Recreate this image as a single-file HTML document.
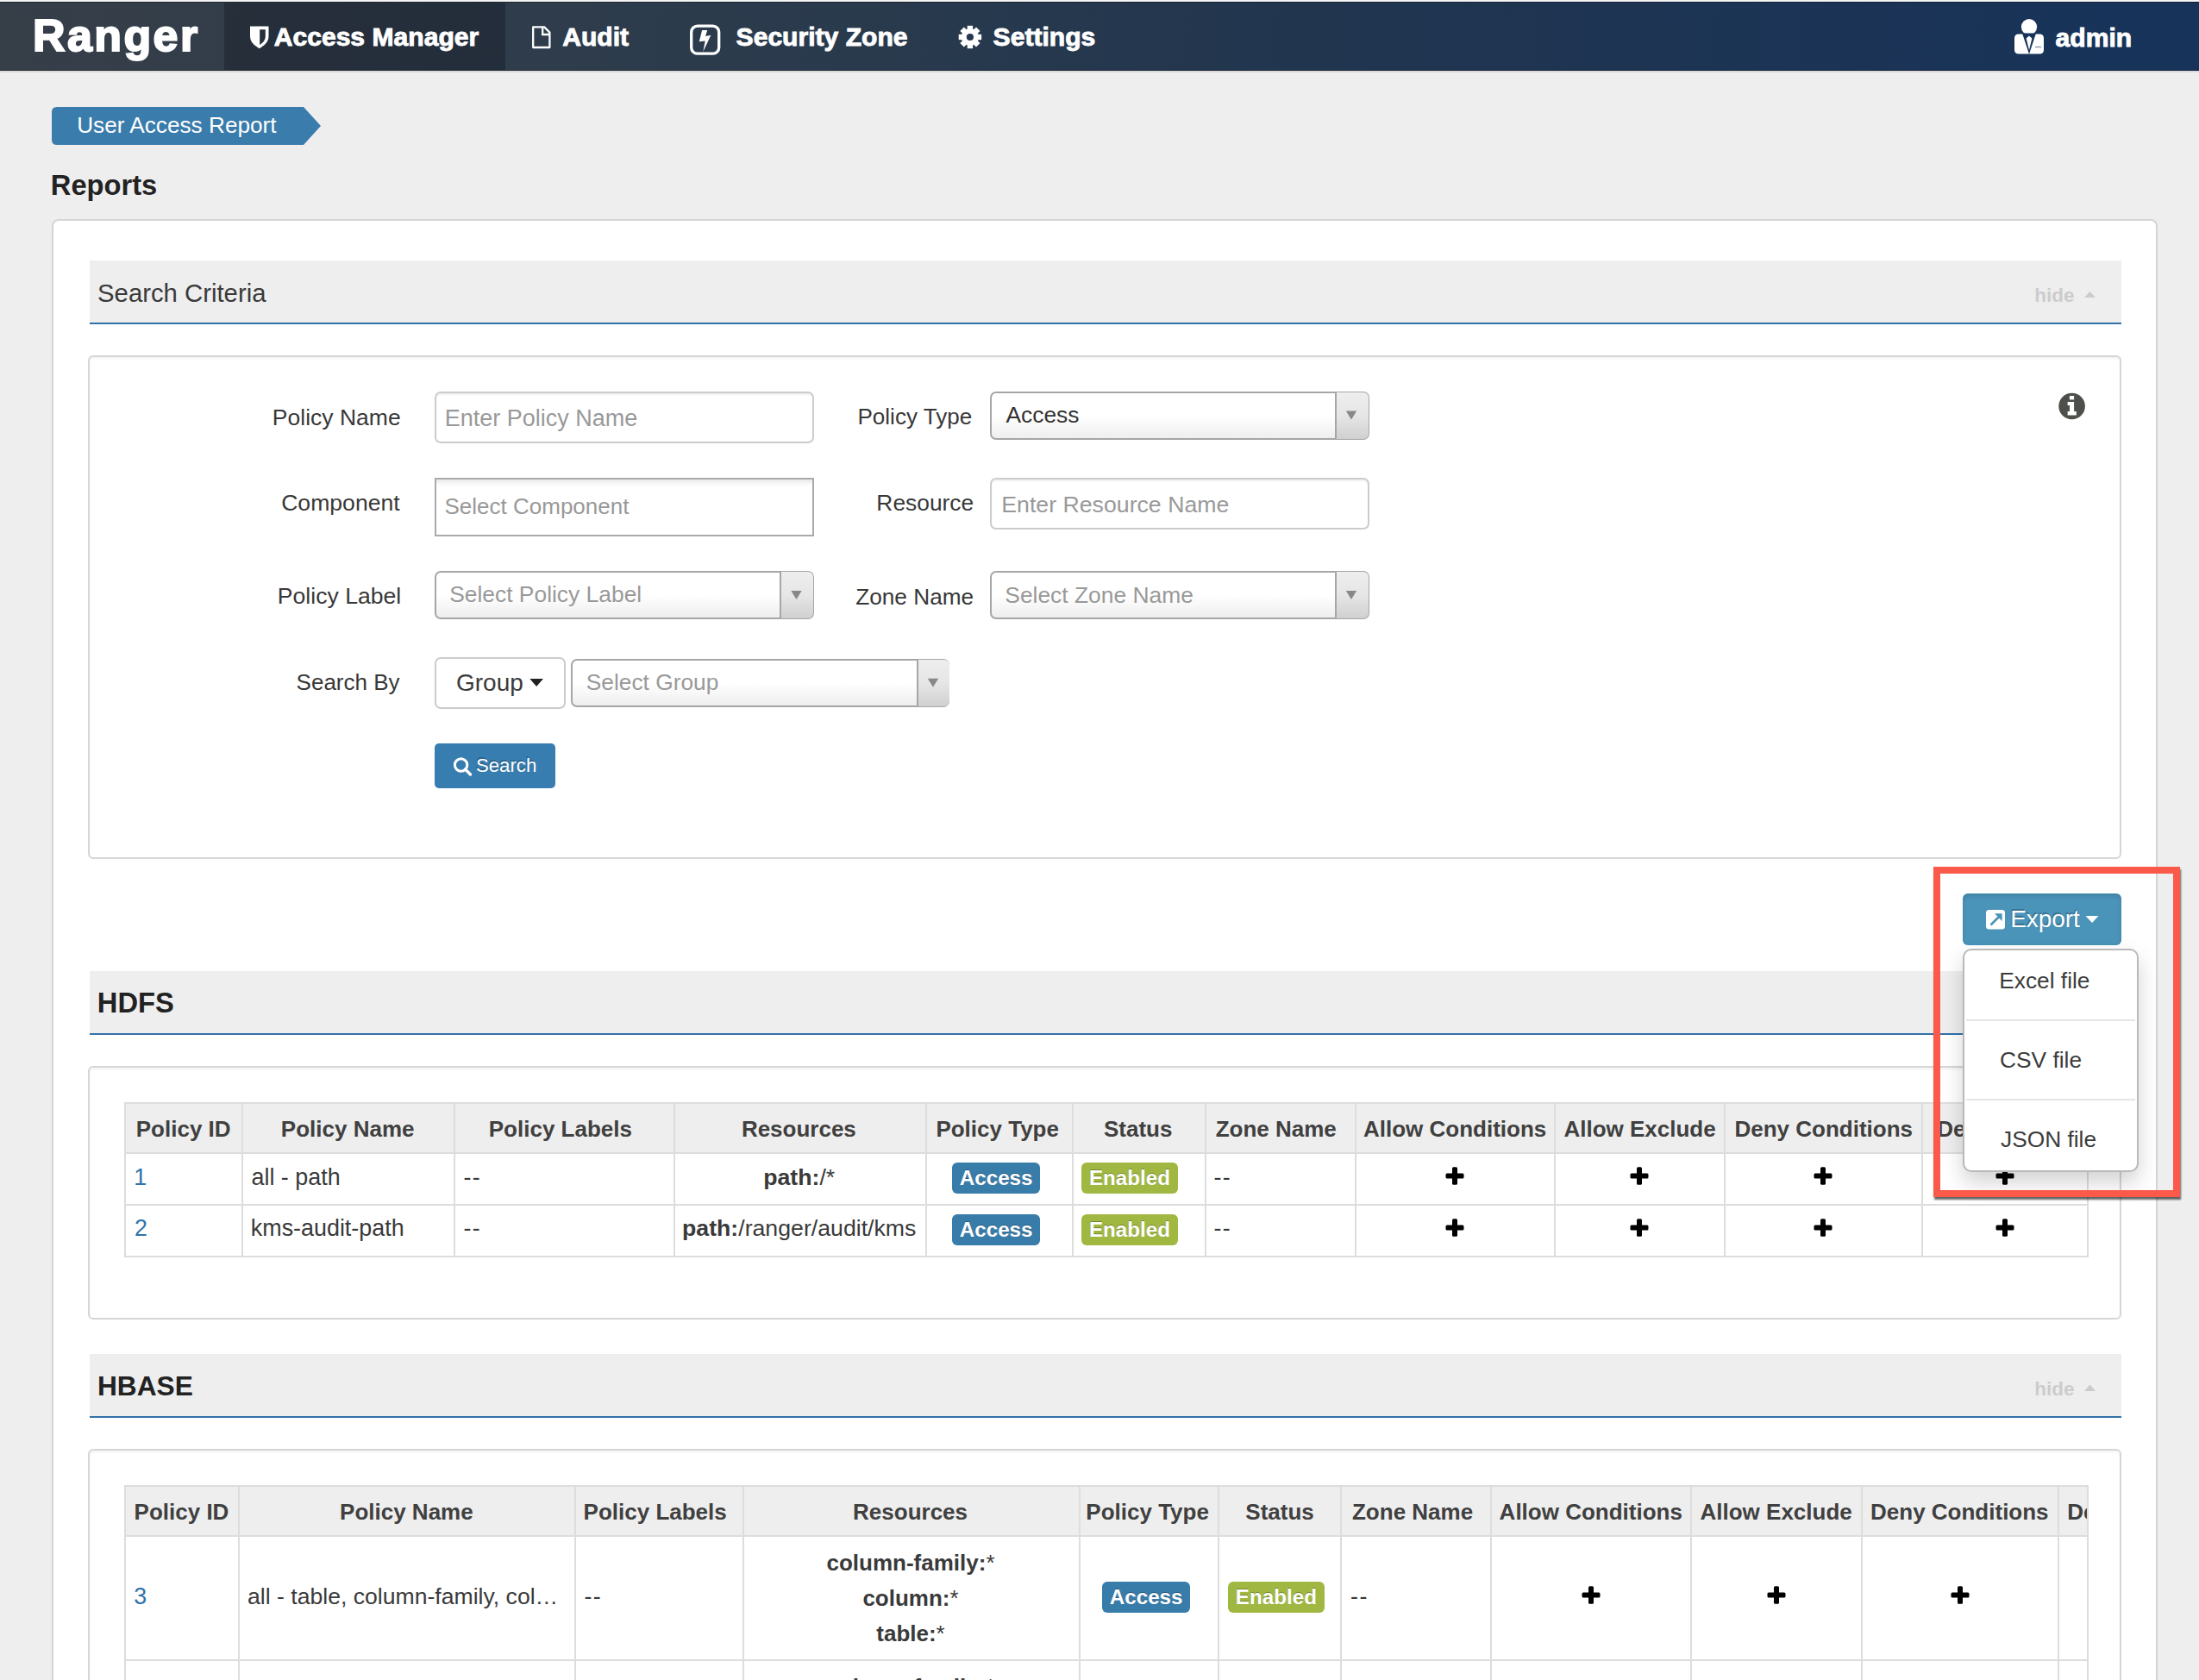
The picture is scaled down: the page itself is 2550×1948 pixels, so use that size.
<!DOCTYPE html><html><head><meta charset="utf-8"><style>
html,body{margin:0;padding:0;}
body{width:2550px;height:1948px;overflow:hidden;background:#eeeeee;position:relative;font-family:"Liberation Sans", sans-serif;}
.a{position:absolute;white-space:nowrap;box-sizing:border-box;}
svg{position:absolute;overflow:visible;}
</style></head><body>
<div class="a" style="left:0.00px;top:0.00px;width:2550.00px;height:2.00px;background:#f4f4f4;"></div>
<div class="a" style="left:0.00px;top:2.00px;width:2550.00px;height:80.00px;background:linear-gradient(90deg,#363e48 0%,#303d4b 20%,#293a4d 40%,#21354f 60%,#17335a 100%);border-top:1px solid rgba(0,0,0,0.35);border-bottom:1px solid rgba(0,0,0,0.35);"></div>
<div class="a" style="left:0.00px;top:82.00px;width:2550.00px;height:2.00px;background:#d9d9d9;"></div>
<div class="a" style="left:260.00px;top:3.00px;width:326.00px;height:78.00px;background:rgba(10,14,22,0.30);"></div>
<div class="a" style="left:38.02px;top:14.77px;font-size:52.00px;line-height:52.00px;font-weight:bold;color:#fff;-webkit-text-stroke:2px #fff;letter-spacing:2.4px;">Ranger</div>
<div class="a" style="left:317.70px;top:28.16px;font-size:30.10px;line-height:30.10px;font-weight:bold;color:#fff;-webkit-text-stroke:0.9px #fff;">Access Manager</div>
<div class="a" style="left:652.20px;top:28.16px;font-size:30.10px;line-height:30.10px;font-weight:bold;color:#fff;-webkit-text-stroke:0.9px #fff;">Audit</div>
<div class="a" style="left:853.58px;top:28.16px;font-size:30.10px;line-height:30.10px;font-weight:bold;color:#fff;-webkit-text-stroke:0.9px #fff;">Security Zone</div>
<div class="a" style="left:1151.58px;top:28.16px;font-size:30.10px;line-height:30.10px;font-weight:bold;color:#fff;-webkit-text-stroke:0.9px #fff;">Settings</div>
<div class="a" style="left:2383.57px;top:28.66px;font-size:30.10px;line-height:30.10px;font-weight:bold;color:#fff;-webkit-text-stroke:0.9px #fff;">admin</div>
<svg style="left:0;top:0" width="2550" height="82"><path d="M290 30.5 H311.5 V42 C311.5 49 306 53 300.7 56.2 C295.5 53 290 49 290 42 Z" fill="#fff"/><path d="M301.2 34.2 H307.8 V42 C307.8 46.5 305 49.5 301.2 52 Z" fill="#262f3b"/><path d="M618.2 31.4 H631.2 L637.4 37.6 V55 H618.2 Z" fill="none" stroke="#fff" stroke-width="2.3" stroke-linejoin="round"/><path d="M629.2 31.4 V40 H637.4" fill="none" stroke="#fff" stroke-width="2.3"/><rect x="801.7" y="30.2" width="32" height="32" rx="7" fill="none" stroke="#fff" stroke-width="3.3"/><path d="M814.1 34.9 L820.2 34.9 L818.1 42.0 L824.4 40.8 L815.3 59.9 L817.7 47.4 L810.8 48.3 Z" fill="#fff"/><g transform="translate(1124.9 43)" fill="#fff"><rect x="-3.2" y="-13.2" width="6.4" height="8" transform="rotate(0)"/><rect x="-3.2" y="-13.2" width="6.4" height="8" transform="rotate(45)"/><rect x="-3.2" y="-13.2" width="6.4" height="8" transform="rotate(90)"/><rect x="-3.2" y="-13.2" width="6.4" height="8" transform="rotate(135)"/><rect x="-3.2" y="-13.2" width="6.4" height="8" transform="rotate(180)"/><rect x="-3.2" y="-13.2" width="6.4" height="8" transform="rotate(225)"/><rect x="-3.2" y="-13.2" width="6.4" height="8" transform="rotate(270)"/><rect x="-3.2" y="-13.2" width="6.4" height="8" transform="rotate(315)"/><circle r="10"/><circle r="4.1" fill="#263650"/></g><circle cx="2353" cy="31.2" r="9.1" fill="#fff"/><path d="M2341 39.5 H2365 Q2370 39.5 2370 44.5 V57.5 Q2370 62.5 2365 62.5 H2341 Q2336 62.5 2336 57.5 V44.5 Q2336 39.5 2341 39.5 Z" fill="#fff"/><path d="M2345 38.6 L2353 62.8 L2361 38.6 Z" fill="#17325a"/><path d="M2353 41.5 L2356.4 44.5 L2353 58 L2349.6 44.5 Z" fill="#fff"/><rect x="2360" y="53.8" width="7" height="1.4" fill="#8597b0"/></svg>
<svg style="left:0;top:0" width="400" height="200"><path d="M66 124 H352 L372 146 L352 168 H66 Q60 168 60 162 V130 Q60 124 66 124 Z" fill="#3a7cab"/></svg>
<div class="a" style="left:89.18px;top:131.82px;font-size:26.20px;line-height:26.20px;font-weight:normal;color:#fff;">User Access Report</div>
<div class="a" style="left:58.81px;top:199.31px;font-size:32.70px;line-height:32.70px;font-weight:bold;color:#222;">Reports</div>
<div class="a" style="left:60.00px;top:254.00px;width:2442.00px;height:1846.00px;background:#fff;border:2px solid #d4d4d4;border-radius:8px;"></div>
<div class="a" style="left:104.00px;top:302.00px;width:2356.00px;height:74.00px;background:#eeeeee;border-bottom:2px solid #3171a9;"></div>
<div class="a" style="left:113.07px;top:325.19px;font-size:29.30px;line-height:29.30px;font-weight:normal;color:#3a3a3a;">Search Criteria</div>
<div class="a" style="left:2359.23px;top:331.95px;font-size:22.50px;line-height:22.50px;font-weight:bold;color:#cccccc;">hide</div>
<svg style="left:0;top:0" width="2550" height="1948"><path d="M2417 345 L2423.5 338 L2430 345 Z" fill="#cccccc"/><path d="M2417 1613 L2423.5 1605.5 L2430 1613 Z" fill="#cccccc"/></svg>
<div class="a" style="left:102.00px;top:412.00px;width:2358.00px;height:584.00px;background:#fff;border:2px solid #d6d6d6;border-radius:6px;box-shadow:inset 0 2px 3px rgba(0,0,0,0.05);"></div>
<div class="a" style="left:315.83px;top:470.85px;font-size:26.52px;line-height:26.52px;font-weight:normal;color:#383838;">Policy Name</div>
<div class="a" style="left:326.17px;top:569.88px;font-size:26.60px;line-height:26.60px;font-weight:normal;color:#383838;">Component</div>
<div class="a" style="left:321.85px;top:678.38px;font-size:26.60px;line-height:26.60px;font-weight:normal;color:#383838;">Policy Label</div>
<div class="a" style="left:343.61px;top:778.39px;font-size:26.00px;line-height:26.00px;font-weight:normal;color:#383838;">Search By</div>
<div class="a" style="left:994.47px;top:469.93px;font-size:26.06px;line-height:26.06px;font-weight:normal;color:#383838;">Policy Type</div>
<div class="a" style="left:1016.36px;top:570.38px;font-size:26.36px;line-height:26.36px;font-weight:normal;color:#383838;">Resource</div>
<div class="a" style="left:992.18px;top:678.50px;font-size:26.22px;line-height:26.22px;font-weight:normal;color:#383838;">Zone Name</div>
<div class="a" style="left:504.00px;top:454.00px;width:440.00px;height:60.00px;background:#fff;border:2px solid #cccccc;border-radius:7px;box-shadow:inset 0 2px 2px rgba(0,0,0,0.06);"></div>
<div class="a" style="left:515.79px;top:472.14px;font-size:27.00px;line-height:27.00px;font-weight:normal;color:#999;">Enter Policy Name</div>
<div class="a" style="left:504.00px;top:554.00px;width:440.00px;height:68.00px;background:linear-gradient(#e9e9e9 0px,#fbfbfb 6px,#fff 9px);border:2px solid #aaaaaa;"></div>
<div class="a" style="left:515.52px;top:574.49px;font-size:26.00px;line-height:26.00px;font-weight:normal;color:#999;">Select Component</div>
<div class="a" style="left:1148.00px;top:454.00px;width:440.00px;height:160.00px;display:none"></div>
<div class="a" style="left:1147.50px;top:554.00px;width:440.50px;height:59.50px;background:#fff;border:2px solid #cccccc;border-radius:7px;box-shadow:inset 0 2px 2px rgba(0,0,0,0.06);"></div>
<div class="a" style="left:1161.31px;top:571.89px;font-size:26.70px;line-height:26.70px;font-weight:normal;color:#999;">Enter Resource Name</div>
<div class="a" style="left:504.00px;top:662.00px;width:440.00px;height:56.00px;background:linear-gradient(#ffffff 0%,#ffffff 50%,#eeeeee 100%);border:2px solid #a6a6a6;border-radius:7px;"></div>
<div class="a" style="left:904.00px;top:663.00px;width:39.00px;height:54.00px;background:linear-gradient(#eeeeee 0%,#e6e6e6 50%,#d0d0d0 100%);border-left:2px solid #a6a6a6;border-radius:0 6px 6px 0;"></div>
<svg style="left:0;top:0" width="1" height="1"><path d="M917.3 685.0 L929.7 685.0 L923.5 695.0 Z" fill="#888"/></svg>
<div class="a" style="left:521.20px;top:676.05px;font-size:26.40px;line-height:26.40px;font-weight:normal;color:#999;">Select Policy Label</div>
<div class="a" style="left:1147.50px;top:453.50px;width:440.50px;height:56.00px;background:linear-gradient(#ffffff 0%,#ffffff 50%,#eeeeee 100%);border:2px solid #a6a6a6;border-radius:7px;"></div>
<div class="a" style="left:1547.50px;top:454.50px;width:39.50px;height:54.00px;background:linear-gradient(#eeeeee 0%,#e6e6e6 50%,#d0d0d0 100%);border-left:2px solid #a6a6a6;border-radius:0 6px 6px 0;"></div>
<svg style="left:0;top:0" width="1" height="1"><path d="M1560.8 476.5 L1573.2 476.5 L1567.0 486.5 Z" fill="#888"/></svg>
<div class="a" style="left:1166.45px;top:468.25px;font-size:26.40px;line-height:26.40px;font-weight:normal;color:#333;">Access</div>
<div class="a" style="left:1147.50px;top:662.00px;width:440.50px;height:56.00px;background:linear-gradient(#ffffff 0%,#ffffff 50%,#eeeeee 100%);border:2px solid #a6a6a6;border-radius:7px;"></div>
<div class="a" style="left:1547.50px;top:663.00px;width:39.50px;height:54.00px;background:linear-gradient(#eeeeee 0%,#e6e6e6 50%,#d0d0d0 100%);border-left:2px solid #a6a6a6;border-radius:0 6px 6px 0;"></div>
<svg style="left:0;top:0" width="1" height="1"><path d="M1560.8 685.0 L1573.2 685.0 L1567.0 695.0 Z" fill="#888"/></svg>
<div class="a" style="left:1165.30px;top:676.65px;font-size:26.40px;line-height:26.40px;font-weight:normal;color:#999;">Select Zone Name</div>
<div class="a" style="left:662.40px;top:764.00px;width:439.10px;height:55.50px;background:linear-gradient(#ffffff 0%,#ffffff 50%,#eeeeee 100%);border:2px solid #a6a6a6;border-radius:7px;"></div>
<div class="a" style="left:1062.50px;top:765.00px;width:38.00px;height:53.50px;background:linear-gradient(#eeeeee 0%,#e6e6e6 50%,#d0d0d0 100%);border-left:2px solid #a6a6a6;border-radius:0 6px 6px 0;"></div>
<svg style="left:0;top:0" width="1" height="1"><path d="M1075.8 786.8 L1088.2 786.8 L1082.0 796.8 Z" fill="#888"/></svg>
<div class="a" style="left:679.81px;top:778.13px;font-size:26.30px;line-height:26.30px;font-weight:normal;color:#999;">Select Group</div>
<div class="a" style="left:504.00px;top:762.00px;width:151.50px;height:59.50px;background:#fff;border:2px solid #cccccc;border-radius:7px;"></div>
<div class="a" style="left:528.99px;top:777.79px;font-size:28.00px;line-height:28.00px;font-weight:normal;color:#3a3a3a;">Group</div>
<svg style="left:0;top:0" width="1" height="1"><path d="M614.3 787 L630 787 L622.15 796 Z" fill="#222"/></svg>
<div class="a" style="left:504.00px;top:862.00px;width:140.00px;height:52.00px;background:#387db0;border-radius:5px;"></div>
<svg style="left:0;top:0" width="1" height="1"><circle cx="534.6" cy="887" r="7.2" fill="none" stroke="#fff" stroke-width="3"/><path d="M539.5 892 L545.5 898" stroke="#fff" stroke-width="3.4" stroke-linecap="round"/></svg>
<div class="a" style="left:551.99px;top:877.20px;font-size:22.20px;line-height:22.20px;font-weight:normal;color:#fff;text-shadow:-1px -2px 0 rgba(0,0,0,0.22);">Search</div>
<svg style="left:0;top:0" width="1" height="1"><circle cx="2402.6" cy="471" r="15.3" fill="#4d4f4a"/><rect x="2399.9" y="459" width="5.2" height="4.4" fill="#fff"/><path d="M2397.6 466 H2405.1 V477 H2407.8 V481.6 H2397.6 V477 H2400 V470 H2397.6 Z" fill="#fff"/></svg>
<div class="a" style="left:104.00px;top:1126.00px;width:2356.00px;height:74.00px;background:#eeeeee;border-bottom:2px solid #3171a9;"></div>
<div class="a" style="left:112.81px;top:1147.31px;font-size:32.70px;line-height:32.70px;font-weight:bold;color:#222;">HDFS</div>
<div class="a" style="left:2359.23px;top:1155.95px;font-size:22.50px;line-height:22.50px;font-weight:bold;color:#cccccc;">hide</div>
<div class="a" style="left:102.00px;top:1236.00px;width:2358.00px;height:294.00px;background:#fff;border:2px solid #d6d6d6;border-radius:6px;box-shadow:inset 0 2px 3px rgba(0,0,0,0.05);"></div>
<div class="a" style="left:104.00px;top:1570.00px;width:2356.00px;height:74.00px;background:#eeeeee;border-bottom:2px solid #3171a9;"></div>
<div class="a" style="left:112.88px;top:1592.16px;font-size:31.70px;line-height:31.70px;font-weight:bold;color:#222;">HBASE</div>
<div class="a" style="left:2359.23px;top:1599.95px;font-size:22.50px;line-height:22.50px;font-weight:bold;color:#cccccc;">hide</div>
<div class="a" style="left:102.00px;top:1680.00px;width:2358.00px;height:420.00px;background:#fff;border:2px solid #d6d6d6;border-radius:6px;box-shadow:inset 0 2px 3px rgba(0,0,0,0.05);"></div>
<svg style="left:0;top:0" width="1" height="1"><path d="M2417 1613 L2423.5 1605.5 L2430 1613 Z" fill="#cccccc"/></svg>
<div class="a" style="left:144.50px;top:1277.50px;width:2276.50px;height:59.50px;background:#eeeeee;"></div>
<div class="a" style="left:144.50px;top:1277.50px;width:2276.50px;height:2.00px;background:#dddddd;"></div>
<div class="a" style="left:144.50px;top:1335.50px;width:2276.50px;height:2.00px;background:#dddddd;"></div>
<div class="a" style="left:144.50px;top:1396.00px;width:2276.50px;height:2.00px;background:#dddddd;"></div>
<div class="a" style="left:144.50px;top:1456.00px;width:2276.50px;height:2.00px;background:#dddddd;"></div>
<div class="a" style="left:143.50px;top:1277.50px;width:2.00px;height:180.50px;background:#dddddd;"></div>
<div class="a" style="left:280.00px;top:1277.50px;width:2.00px;height:180.50px;background:#dddddd;"></div>
<div class="a" style="left:526.00px;top:1277.50px;width:2.00px;height:180.50px;background:#dddddd;"></div>
<div class="a" style="left:780.50px;top:1277.50px;width:2.00px;height:180.50px;background:#dddddd;"></div>
<div class="a" style="left:1072.50px;top:1277.50px;width:2.00px;height:180.50px;background:#dddddd;"></div>
<div class="a" style="left:1242.50px;top:1277.50px;width:2.00px;height:180.50px;background:#dddddd;"></div>
<div class="a" style="left:1396.50px;top:1277.50px;width:2.00px;height:180.50px;background:#dddddd;"></div>
<div class="a" style="left:1570.50px;top:1277.50px;width:2.00px;height:180.50px;background:#dddddd;"></div>
<div class="a" style="left:1802.00px;top:1277.50px;width:2.00px;height:180.50px;background:#dddddd;"></div>
<div class="a" style="left:1998.50px;top:1277.50px;width:2.00px;height:180.50px;background:#dddddd;"></div>
<div class="a" style="left:2227.50px;top:1277.50px;width:2.00px;height:180.50px;background:#dddddd;"></div>
<div class="a" style="left:2419.50px;top:1277.50px;width:2.00px;height:180.50px;background:#dddddd;"></div>
<div class="a" style="left:157.77px;top:1296.39px;font-size:26.00px;line-height:26.00px;font-weight:bold;color:#404040;">Policy ID</div>
<div class="a" style="left:325.86px;top:1296.39px;font-size:26.00px;line-height:26.00px;font-weight:bold;color:#404040;">Policy Name</div>
<div class="a" style="left:566.77px;top:1296.39px;font-size:26.00px;line-height:26.00px;font-weight:bold;color:#404040;">Policy Labels</div>
<div class="a" style="left:859.88px;top:1296.39px;font-size:26.00px;line-height:26.00px;font-weight:bold;color:#404040;">Resources</div>
<div class="a" style="left:1085.38px;top:1296.39px;font-size:26.00px;line-height:26.00px;font-weight:bold;color:#404040;">Policy Type</div>
<div class="a" style="left:1279.98px;top:1296.39px;font-size:26.00px;line-height:26.00px;font-weight:bold;color:#404040;">Status</div>
<div class="a" style="left:1409.64px;top:1296.39px;font-size:26.00px;line-height:26.00px;font-weight:bold;color:#404040;">Zone Name</div>
<div class="a" style="left:1580.96px;top:1296.39px;font-size:26.00px;line-height:26.00px;font-weight:bold;color:#404040;">Allow Conditions</div>
<div class="a" style="left:1813.44px;top:1296.39px;font-size:26.00px;line-height:26.00px;font-weight:bold;color:#404040;">Allow Exclude</div>
<div class="a" style="left:2011.49px;top:1296.39px;font-size:26.00px;line-height:26.00px;font-weight:bold;color:#404040;">Deny Conditions</div>
<div class="a" style="left:2246.26px;top:1296.39px;font-size:26.00px;line-height:26.00px;font-weight:bold;color:#404040;">De</div>
<div class="a" style="left:155.36px;top:1351.81px;font-size:26.80px;line-height:26.80px;font-weight:normal;color:#2f72ab;">1</div>
<div class="a" style="left:291.46px;top:1351.72px;font-size:26.90px;line-height:26.90px;font-weight:normal;color:#3a3a3a;">all - path</div>
<div class="a" style="left:537.41px;top:1351.81px;font-size:26.80px;line-height:26.80px;font-weight:normal;color:#3a3a3a;letter-spacing:1.5px;">--</div>
<div class="a" style="left:885.22px;top:1351.89px;font-size:26.7px;line-height:26.7px;color:#3a3a3a;"><b>path:</b>/*</div>
<div class="a" style="left:1104.00px;top:1348.00px;width:102.00px;height:36.00px;background:#387caa;border-radius:6px;"></div>
<div class="a" style="left:1112.81px;top:1354.11px;font-size:24.20px;line-height:24.20px;font-weight:bold;color:#fff;text-shadow:0 -1.5px 0 rgba(0,0,0,0.3);">Access</div>
<div class="a" style="left:1254.00px;top:1348.00px;width:112.00px;height:36.00px;background:#a0b842;border-radius:6px;"></div>
<div class="a" style="left:1262.92px;top:1354.11px;font-size:24.20px;line-height:24.20px;font-weight:bold;color:#fff;text-shadow:0 -1.5px 0 rgba(0,0,0,0.3);">Enabled</div>
<div class="a" style="left:1407.41px;top:1351.81px;font-size:26.80px;line-height:26.80px;font-weight:normal;color:#3a3a3a;letter-spacing:1.5px;">--</div>
<svg style="left:0;top:0" width="1" height="1"><rect x="1676.5" y="1360.5" width="21" height="6" rx="1.5" fill="#000"/><rect x="1684.0" y="1353.2" width="6" height="20.5" rx="1.5" fill="#000"/></svg>
<svg style="left:0;top:0" width="1" height="1"><rect x="1890.5" y="1360.5" width="21" height="6" rx="1.5" fill="#000"/><rect x="1898.0" y="1353.2" width="6" height="20.5" rx="1.5" fill="#000"/></svg>
<svg style="left:0;top:0" width="1" height="1"><rect x="2103.5" y="1360.5" width="21" height="6" rx="1.5" fill="#000"/><rect x="2111.0" y="1353.2" width="6" height="20.5" rx="1.5" fill="#000"/></svg>
<svg style="left:0;top:0" width="1" height="1"><rect x="2314.5" y="1360.5" width="21" height="6" rx="1.5" fill="#000"/><rect x="2322.0" y="1353.2" width="6" height="20.5" rx="1.5" fill="#000"/></svg>
<div class="a" style="left:156.05px;top:1411.31px;font-size:26.80px;line-height:26.80px;font-weight:normal;color:#2f72ab;">2</div>
<div class="a" style="left:290.79px;top:1411.22px;font-size:26.90px;line-height:26.90px;font-weight:normal;color:#3a3a3a;">kms-audit-path</div>
<div class="a" style="left:537.41px;top:1411.31px;font-size:26.80px;line-height:26.80px;font-weight:normal;color:#3a3a3a;letter-spacing:1.5px;">--</div>
<div class="a" style="left:790.99px;top:1411.39px;font-size:26.7px;line-height:26.7px;color:#3a3a3a;"><b>path:</b>/ranger/audit/kms</div>
<div class="a" style="left:1104.00px;top:1408.00px;width:102.00px;height:36.00px;background:#387caa;border-radius:6px;"></div>
<div class="a" style="left:1112.81px;top:1414.11px;font-size:24.20px;line-height:24.20px;font-weight:bold;color:#fff;text-shadow:0 -1.5px 0 rgba(0,0,0,0.3);">Access</div>
<div class="a" style="left:1254.00px;top:1408.00px;width:112.00px;height:36.00px;background:#a0b842;border-radius:6px;"></div>
<div class="a" style="left:1262.92px;top:1414.11px;font-size:24.20px;line-height:24.20px;font-weight:bold;color:#fff;text-shadow:0 -1.5px 0 rgba(0,0,0,0.3);">Enabled</div>
<div class="a" style="left:1407.41px;top:1411.31px;font-size:26.80px;line-height:26.80px;font-weight:normal;color:#3a3a3a;letter-spacing:1.5px;">--</div>
<svg style="left:0;top:0" width="1" height="1"><rect x="1676.5" y="1420.5" width="21" height="6" rx="1.5" fill="#000"/><rect x="1684.0" y="1413.2" width="6" height="20.5" rx="1.5" fill="#000"/></svg>
<svg style="left:0;top:0" width="1" height="1"><rect x="1890.5" y="1420.5" width="21" height="6" rx="1.5" fill="#000"/><rect x="1898.0" y="1413.2" width="6" height="20.5" rx="1.5" fill="#000"/></svg>
<svg style="left:0;top:0" width="1" height="1"><rect x="2103.5" y="1420.5" width="21" height="6" rx="1.5" fill="#000"/><rect x="2111.0" y="1413.2" width="6" height="20.5" rx="1.5" fill="#000"/></svg>
<svg style="left:0;top:0" width="1" height="1"><rect x="2314.5" y="1420.5" width="21" height="6" rx="1.5" fill="#000"/><rect x="2322.0" y="1413.2" width="6" height="20.5" rx="1.5" fill="#000"/></svg>
<div class="a" style="left:144.50px;top:1721.50px;width:2276.50px;height:59.50px;background:#eeeeee;"></div>
<div class="a" style="left:144.50px;top:1721.50px;width:2276.50px;height:2.00px;background:#dddddd;"></div>
<div class="a" style="left:144.50px;top:1779.50px;width:2276.50px;height:2.00px;background:#dddddd;"></div>
<div class="a" style="left:144.50px;top:1923.50px;width:2276.50px;height:2.00px;background:#dddddd;"></div>
<div class="a" style="left:143.50px;top:1721.50px;width:2.00px;height:226.50px;background:#dddddd;"></div>
<div class="a" style="left:276.00px;top:1721.50px;width:2.00px;height:226.50px;background:#dddddd;"></div>
<div class="a" style="left:666.00px;top:1721.50px;width:2.00px;height:226.50px;background:#dddddd;"></div>
<div class="a" style="left:860.50px;top:1721.50px;width:2.00px;height:226.50px;background:#dddddd;"></div>
<div class="a" style="left:1250.50px;top:1721.50px;width:2.00px;height:226.50px;background:#dddddd;"></div>
<div class="a" style="left:1412.00px;top:1721.50px;width:2.00px;height:226.50px;background:#dddddd;"></div>
<div class="a" style="left:1554.00px;top:1721.50px;width:2.00px;height:226.50px;background:#dddddd;"></div>
<div class="a" style="left:1727.50px;top:1721.50px;width:2.00px;height:226.50px;background:#dddddd;"></div>
<div class="a" style="left:1960.00px;top:1721.50px;width:2.00px;height:226.50px;background:#dddddd;"></div>
<div class="a" style="left:2158.00px;top:1721.50px;width:2.00px;height:226.50px;background:#dddddd;"></div>
<div class="a" style="left:2386.00px;top:1721.50px;width:2.00px;height:226.50px;background:#dddddd;"></div>
<div class="a" style="left:2419.50px;top:1721.50px;width:2.00px;height:226.50px;background:#dddddd;"></div>
<div class="a" style="left:155.57px;top:1739.79px;font-size:26.00px;line-height:26.00px;font-weight:bold;color:#404040;">Policy ID</div>
<div class="a" style="left:394.06px;top:1739.79px;font-size:26.00px;line-height:26.00px;font-weight:bold;color:#404040;">Policy Name</div>
<div class="a" style="left:676.57px;top:1739.79px;font-size:26.00px;line-height:26.00px;font-weight:bold;color:#404040;">Policy Labels</div>
<div class="a" style="left:989.08px;top:1739.79px;font-size:26.00px;line-height:26.00px;font-weight:bold;color:#404040;">Resources</div>
<div class="a" style="left:1259.33px;top:1739.79px;font-size:26.00px;line-height:26.00px;font-weight:bold;color:#404040;">Policy Type</div>
<div class="a" style="left:1444.33px;top:1739.79px;font-size:26.00px;line-height:26.00px;font-weight:bold;color:#404040;">Status</div>
<div class="a" style="left:1567.99px;top:1739.79px;font-size:26.00px;line-height:26.00px;font-weight:bold;color:#404040;">Zone Name</div>
<div class="a" style="left:1738.61px;top:1739.79px;font-size:26.00px;line-height:26.00px;font-weight:bold;color:#404040;">Allow Conditions</div>
<div class="a" style="left:1971.49px;top:1739.79px;font-size:26.00px;line-height:26.00px;font-weight:bold;color:#404040;">Allow Exclude</div>
<div class="a" style="left:2169.04px;top:1739.79px;font-size:26.00px;line-height:26.00px;font-weight:bold;color:#404040;">Deny Conditions</div>
<div class="a" style="left:2380px;top:1720px;width:39.5px;height:62px;overflow:hidden;">
<div class="a" style="left:17.16px;top:19.79px;font-size:26.00px;line-height:26.00px;font-weight:bold;color:#404040;">De</div>
</div>
<div class="a" style="left:155.28px;top:1837.71px;font-size:26.80px;line-height:26.80px;font-weight:normal;color:#2f72ab;">3</div>
<div class="a" style="left:287.07px;top:1837.88px;font-size:26.60px;line-height:26.60px;font-weight:normal;color:#3a3a3a;">all - table, column-family, col…</div>
<div class="a" style="left:677.41px;top:1837.71px;font-size:26.80px;line-height:26.80px;font-weight:normal;color:#3a3a3a;letter-spacing:1.5px;">--</div>
<div class="a" style="left:958.49px;top:1798.79px;font-size:26px;line-height:26px;color:#3a3a3a;"><b>column-family:</b>*</div>
<div class="a" style="left:1000.39px;top:1840.49px;font-size:26px;line-height:26px;color:#3a3a3a;"><b>column:</b>*</div>
<div class="a" style="left:1016.27px;top:1881.39px;font-size:26px;line-height:26px;color:#3a3a3a;"><b>table:</b>*</div>
<div class="a" style="left:958.49px;top:1942.79px;font-size:26px;line-height:26px;color:#3a3a3a;"><b>column-family:</b>*</div>
<div class="a" style="left:1278.00px;top:1834.00px;width:102.00px;height:36.00px;background:#387caa;border-radius:6px;"></div>
<div class="a" style="left:1286.81px;top:1840.11px;font-size:24.20px;line-height:24.20px;font-weight:bold;color:#fff;text-shadow:0 -1.5px 0 rgba(0,0,0,0.3);">Access</div>
<div class="a" style="left:1424.30px;top:1834.00px;width:111.30px;height:36.00px;background:#a0b842;border-radius:6px;"></div>
<div class="a" style="left:1432.87px;top:1840.11px;font-size:24.20px;line-height:24.20px;font-weight:bold;color:#fff;text-shadow:0 -1.5px 0 rgba(0,0,0,0.3);">Enabled</div>
<div class="a" style="left:1566.01px;top:1837.71px;font-size:26.80px;line-height:26.80px;font-weight:normal;color:#3a3a3a;letter-spacing:1.5px;">--</div>
<svg style="left:0;top:0" width="1" height="1"><rect x="1834.5" y="1846.5" width="21" height="6" rx="1.5" fill="#000"/><rect x="1842.0" y="1839.2" width="6" height="20.5" rx="1.5" fill="#000"/></svg>
<svg style="left:0;top:0" width="1" height="1"><rect x="2049.5" y="1846.5" width="21" height="6" rx="1.5" fill="#000"/><rect x="2057.0" y="1839.2" width="6" height="20.5" rx="1.5" fill="#000"/></svg>
<svg style="left:0;top:0" width="1" height="1"><rect x="2262.5" y="1846.5" width="21" height="6" rx="1.5" fill="#000"/><rect x="2270.0" y="1839.2" width="6" height="20.5" rx="1.5" fill="#000"/></svg>
<div class="a" style="left:2276.00px;top:1036.00px;width:184.00px;height:60.00px;background:#4a93b9;border-radius:6px;box-shadow:inset 0 3px 5px rgba(0,0,0,0.125);"></div>
<svg style="left:0;top:0" width="1" height="1"><rect x="2303" y="1055" width="22" height="22.5" rx="3.5" fill="#fff"/><path d="M2308.5 1072.5 L2319.5 1061.5" stroke="#4a93b9" stroke-width="2.6"/><path d="M2313 1059.3 H2321.6 V1068 Z" fill="#4a93b9"/><path d="M2418.5 1062 L2433.5 1062 L2426 1070 Z" fill="#fff"/></svg>
<div class="a" style="left:2331.21px;top:1052.38px;font-size:27.90px;line-height:27.90px;font-weight:normal;color:#fff;text-shadow:-1px -2px 0 rgba(0,0,0,0.22);">Export</div>
<div class="a" style="left:2276.00px;top:1100.00px;width:204.00px;height:259.00px;background:#fff;border:2px solid #b9b9b9;border-radius:10px;box-shadow:0 12px 24px rgba(0,0,0,0.175);"></div>
<div class="a" style="left:2318.24px;top:1124.03px;font-size:26.30px;line-height:26.30px;font-weight:normal;color:#3c3c3c;">Excel file</div>
<div class="a" style="left:2280.00px;top:1182.00px;width:196.00px;height:2.00px;background:#e5e5e5;"></div>
<div class="a" style="left:2319.06px;top:1216.23px;font-size:26.30px;line-height:26.30px;font-weight:normal;color:#3c3c3c;">CSV file</div>
<div class="a" style="left:2280.00px;top:1274.00px;width:196.00px;height:2.00px;background:#e5e5e5;"></div>
<div class="a" style="left:2319.99px;top:1307.83px;font-size:26.30px;line-height:26.30px;font-weight:normal;color:#3c3c3c;">JSON file</div>
<div class="a" style="left:2242.00px;top:1005.00px;width:286.00px;height:383.00px;border:8.5px solid #fb594a;box-shadow:1px 3px 2px rgba(0,0,0,0.6);"></div>
</body></html>
